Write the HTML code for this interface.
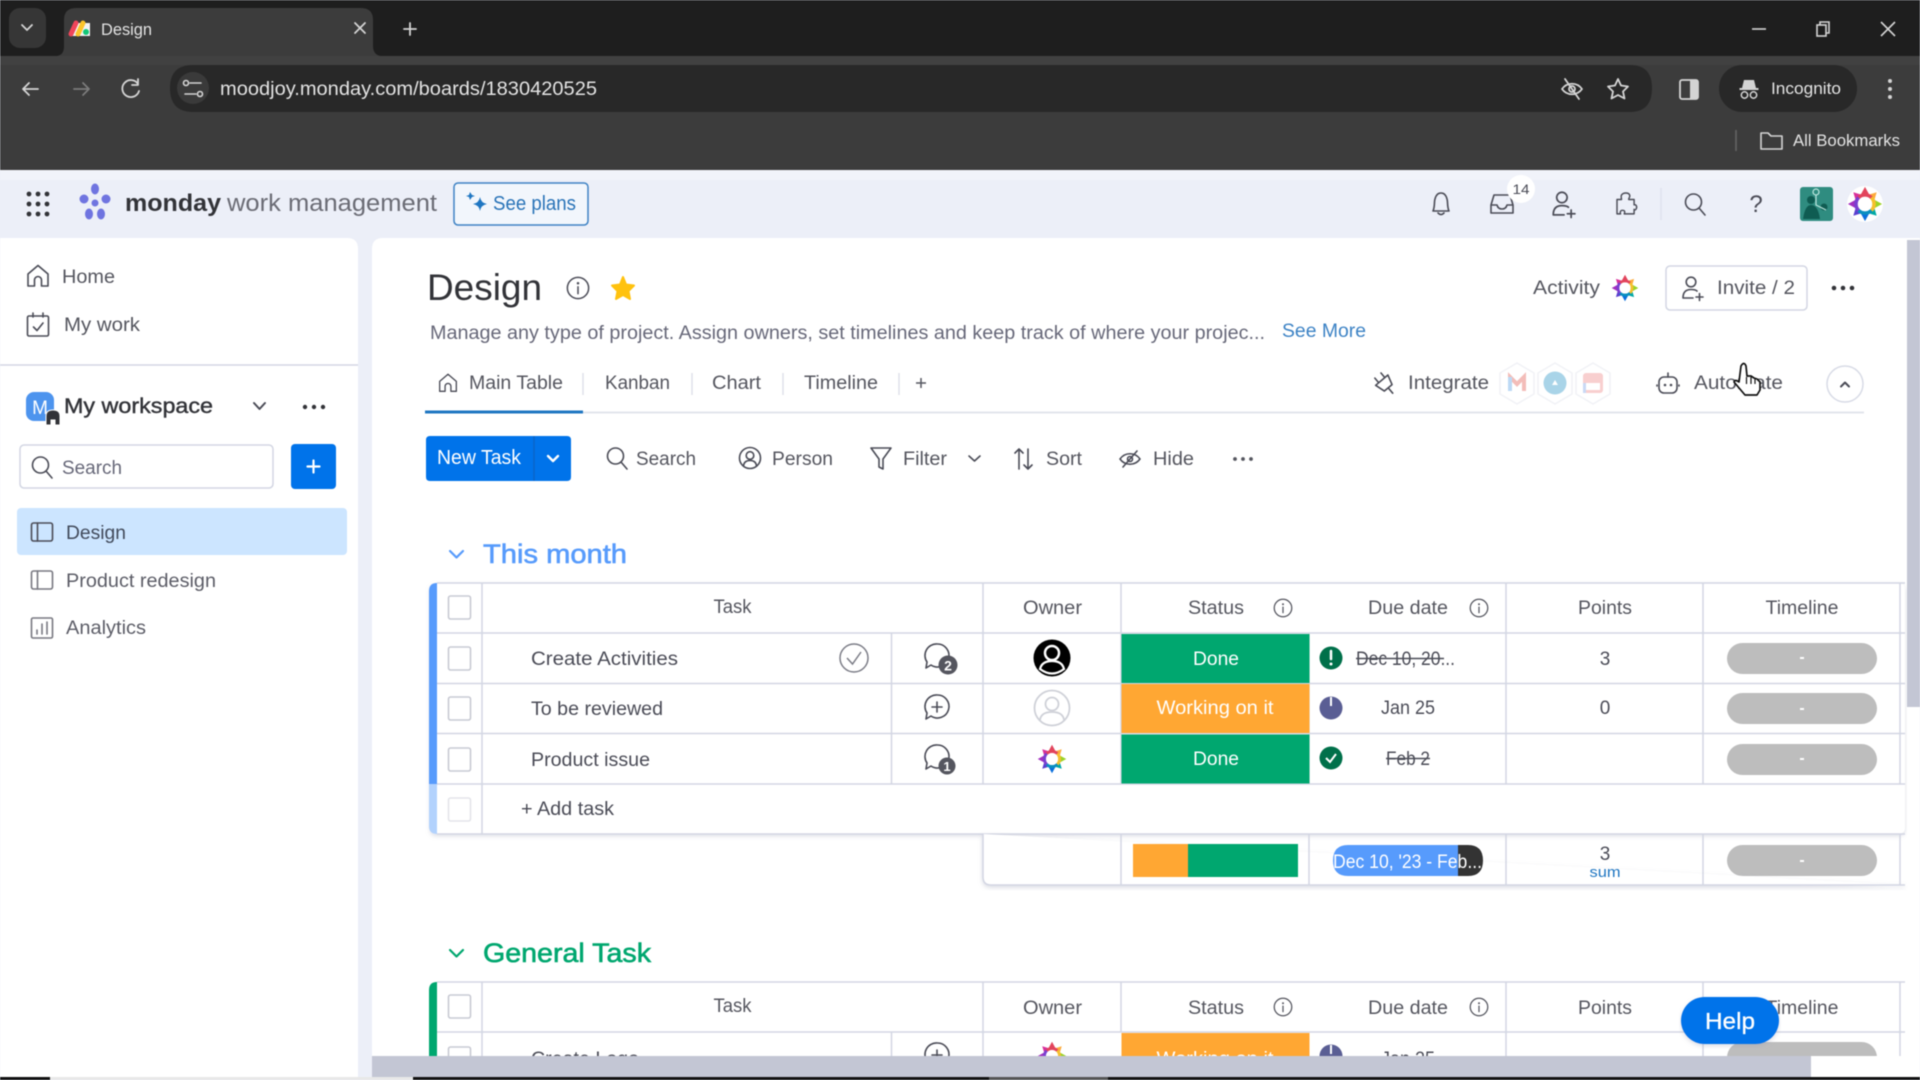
<!DOCTYPE html>
<html lang="en"><head><meta charset="utf-8"><title>Design</title>
<style>
html,body{margin:0;padding:0;background:#eceff8;width:1920px;height:1080px;overflow:hidden}
svg{display:block;position:absolute;left:0;top:0;filter:blur(.45px)}
text{font-family:"Liberation Sans",sans-serif;fill:#4b4c57;font-size:19px}
.c{text-anchor:middle}
.ch{fill:#e3e3e3;font-size:18px}
.i{fill:none;stroke:#4b4c57;stroke-width:1.6;stroke-linecap:round;stroke-linejoin:round}
.w{fill:none;stroke:#d4d4d4;stroke-width:1.8;stroke-linecap:round;stroke-linejoin:round}
.l{stroke:#d3d6e3;stroke-width:1.5}
.cb{fill:#fff;stroke:#c8cad3;stroke-width:1.6}
.st{fill:#fff;font-size:19px;text-anchor:middle}
.hd{fill:#55565f;font-size:19px}
</style></head><body>
<svg width="1920" height="1080" viewBox="0 0 1920 1080" xmlns="http://www.w3.org/2000/svg">
<defs>
<symbol id="star" viewBox="-20 -20 40 40" overflow="visible">
<polygon points="-6,-8 0,-19 6,-8" fill="#e2445c"/>
<polygon points="3,-10 13,-13 10,-3" fill="#fdab3d"/>
<polygon points="8,-6 19,0 8,6" fill="#9cd326"/>
<polygon points="10,3 13,13 3,10" fill="#00a9a5"/>
<polygon points="6,8 0,19 -6,8" fill="#0a6fdc"/>
<polygon points="-3,10 -13,13 -10,3" fill="#5a3fd0"/>
<polygon points="-8,6 -19,0 -8,-6" fill="#a22fc0"/>
<polygon points="-10,-3 -13,-13 -3,-10" fill="#d92f9a"/>
<circle r="10" fill="none" stroke="#e2445c" stroke-width="4" stroke-dasharray="15.7 47.1" transform="rotate(-135)"/>
<circle r="10" fill="none" stroke="#f5c02e" stroke-width="4" stroke-dasharray="15.7 47.1" transform="rotate(-45)"/>
<circle r="10" fill="none" stroke="#0a8fc0" stroke-width="4" stroke-dasharray="15.7 47.1" transform="rotate(45)"/>
<circle r="10" fill="none" stroke="#7a3fd0" stroke-width="4" stroke-dasharray="15.7 47.1" transform="rotate(135)"/>
<circle r="8" fill="#fff"/>
</symbol>
<symbol id="home" viewBox="-12 -12 24 24" overflow="visible">
<path class="i" d="M-10 -2 L0 -10.5 L10 -2 V10 H3.5 V4 A3.5 3.5 0 0 0 -3.5 4 V10 H-10 Z"/>
</symbol>
<symbol id="board" viewBox="-12 -12 24 24" overflow="visible">
<rect class="i" x="-10.5" y="-9" width="21" height="18" rx="2"/><path class="i" d="M-4.5 -9 V9"/>
</symbol>
<symbol id="info" viewBox="-12 -12 24 24" overflow="visible">
<circle class="i" r="8.5" style="stroke-width:1.2"/><path class="i" d="M0 -1 V4.5" style="stroke-width:1.2"/><circle cy="-3.8" r="1" fill="#4b4c57"/>
</symbol>
<symbol id="infob" viewBox="-12 -12 24 24" overflow="visible">
<circle class="i" r="10.5" style="stroke-width:1.5;stroke:#55565f"/><path class="i" d="M0 -1 V5.5" style="stroke-width:1.5;stroke:#55565f"/><circle cy="-4.5" r="1.2" fill="#55565f"/>
</symbol>
<symbol id="search" viewBox="-12 -12 24 24" overflow="visible">
<circle class="i" cx="-1.5" cy="-2" r="8"/><path class="i" d="M4 4 L10 11"/>
</symbol>
<symbol id="inv" viewBox="-12 -12 24 24" overflow="visible">
<circle class="i" cx="-1" cy="-6" r="4.8"/><path class="i" d="M-9 10 C-9 4 -6 1.5 -1 1.5 C2 1.5 4 2 5 3 M-9 10 H1 M4 9 H11 M7.5 5.5 V12.5"/>
</symbol>
<symbol id="bub" viewBox="-14 -14 28 28" overflow="visible">
<path class="i" d="M0 -12 A11.5 11.5 0 1 1 -6 9 L-11 12 L-10 6 A11.5 11.5 0 0 1 0 -12 Z"/>
</symbol>
<symbol id="hex" viewBox="-22 -22 44 44" overflow="visible">
<polygon points="0,-20 17,-10 17,11 0,21 -17,11 -17,-10" fill="#fff" stroke="#f1f2f6" stroke-width="1.5"/>
</symbol>
<filter id="sh" x="-2%" y="-5%" width="104%" height="115%"><feDropShadow dx="0" dy="2" stdDeviation="2.500" flood-color="#9aa0b5" flood-opacity=".35"/></filter>
</defs>

<!-- browser chrome -->
<rect width="1920" height="56" fill="#1e1e1e"/>
<rect y="56" width="1920" height="114" fill="#3c3c3c"/>
<rect y="56" width="1920" height="9" fill="#414141"/>
<rect x="9" y="8" width="37" height="40" rx="11" fill="#363636"/>
<path class="w" d="M22 25 L27 30 L32 25"/>
<path d="M55 56 C62 56 64 52 64 46 V20 Q64 8 76 8 H361 Q373 8 373 20 V46 C373 52 376 56 382 56 Z" fill="#3c3c3c"/>
<path d="M70 34 L75 23 L90 23 L90 36 L70 36 Z" fill="#f3f3f3"/>
<g stroke-width="5" stroke-linecap="round" fill="none">
<path d="M71 34 L76 23" stroke="#f0455a"/><path d="M78 34 L83 23" stroke="#fcc52a"/></g>
<circle cx="86" cy="32" r="3" fill="#12c777"/>
<text class="ch" x="101" y="35" textLength="51" lengthAdjust="spacingAndGlyphs" style="font-size:17px">Design</text>
<path class="w" d="M355 23 L365 33 M365 23 L355 33"/>
<path class="w" d="M404 29 H416 M410 23 V35"/>
<path d="M170 88 Q170 65 193 65 H1630 Q1652 65 1652 88 Q1652 112 1630 112 H193 Q170 112 170 88 Z" fill="#282828"/>
<path class="w" d="M23 89 H38 M29 83 L23 89 L29 95"/>
<path class="w" d="M74 89 H89 M83 83 L89 89 L83 95" style="stroke:#7b7b7b"/>
<path class="w" d="M138 84 A8.5 8.5 0 1 0 139 91 M138 79 V85 H132"/>
<circle cx="193" cy="88" r="16" fill="#3a3a3a"/>
<path class="w" d="M190 83 H201 M185 94 H196" style="stroke-width:1.6"/>
<circle cx="186" cy="83" r="2.5" fill="none" stroke="#d4d4d4" stroke-width="1.6"/><circle cx="200" cy="94" r="2.5" fill="none" stroke="#d4d4d4" stroke-width="1.6"/>
<text class="ch" x="220" y="95" textLength="377" lengthAdjust="spacingAndGlyphs" style="font-size:19px">moodjoy.monday.com/boards/1830420525</text>
<g transform="translate(1572 89)"><path class="w" d="M-10 0 C-5 -7 5 -7 10 0 C5 7 -5 7 -10 0 Z M-7 -10 L7 10"/><circle r="3" class="w"/></g>
<path class="w" d="M1618 79 L1621 85.500 L1628 86.500 L1623 91.500 L1624.500 98.500 L1618 95 L1611.500 98.500 L1613 91.500 L1608 86.500 L1615 85.500 Z"/>
<rect x="1680" y="80" width="18" height="19" rx="2" fill="none" stroke="#d4d4d4" stroke-width="1.800"/><rect x="1690" y="80" width="8" height="19" fill="#d4d4d4"/>
<rect x="1719" y="65" width="138" height="47" rx="23" fill="#282828"/>
<path d="M1744 80 H1754 L1756 88 H1758.500 V90 H1739.500 V88 H1742 Z" fill="#d4d4d4"/>
<circle cx="1744.500" cy="95" r="3.200" class="w" style="stroke-width:1.500"/><circle cx="1753.500" cy="95" r="3.200" class="w" style="stroke-width:1.500"/>
<text class="ch" x="1771" y="94" textLength="70" lengthAdjust="spacingAndGlyphs" style="font-size:17px">Incognito</text>
<circle cx="1890" cy="81" r="2" fill="#d4d4d4"/><circle cx="1890" cy="89" r="2" fill="#d4d4d4"/><circle cx="1890" cy="97" r="2" fill="#d4d4d4"/>
<path d="M1752 29 H1766" stroke="#d4d4d4" stroke-width="1.600"/>
<rect x="1817" y="25" width="9" height="11" fill="none" stroke="#d4d4d4" stroke-width="1.600"/><path d="M1820 25 V22 H1829 V33 H1826" fill="none" stroke="#d4d4d4" stroke-width="1.600"/>
<path d="M1881 22 L1895 36 M1895 22 L1881 36" stroke="#d4d4d4" stroke-width="1.600"/>
<path d="M1736 130 V151" stroke="#666" stroke-width="1.500"/>
<path class="w" d="M1761 133 H1768 L1771 136 H1782 V149 H1761 Z" style="stroke-width:1.600"/>
<text class="ch" x="1793" y="146" textLength="107" lengthAdjust="spacingAndGlyphs" style="font-size:17px">All Bookmarks</text>

<!-- app frame -->
<rect y="170" width="1920" height="907" fill="#eceff8"/>
<rect y="170" width="1920" height="10" fill="#f1f3fa"/>
<g fill="#323338">
<circle cx="29" cy="194" r="2.400"/><circle cx="38" cy="194" r="2.400"/><circle cx="47" cy="194" r="2.400"/>
<circle cx="29" cy="204" r="2.400"/><circle cx="38" cy="204" r="2.400"/><circle cx="47" cy="204" r="2.400"/>
<circle cx="29" cy="214" r="2.400"/><circle cx="38" cy="214" r="2.400"/><circle cx="47" cy="214" r="2.400"/>
</g>
<g fill="#6f74e0">
<ellipse cx="95" cy="189" rx="4" ry="5.500"/><ellipse cx="84" cy="199" rx="4.500" ry="4.500"/><ellipse cx="106" cy="199" rx="4.500" ry="4.500"/>
<ellipse cx="95" cy="203" rx="3.500" ry="3.500"/><ellipse cx="89" cy="214" rx="4" ry="5.500"/><ellipse cx="101" cy="214" rx="4" ry="5.500"/></g>
<text x="125" y="211" textLength="96" lengthAdjust="spacingAndGlyphs" style="font-size:24px;font-weight:bold;fill:#323338">monday</text>
<text x="227" y="211" textLength="210" lengthAdjust="spacingAndGlyphs" style="font-size:24px;fill:#6b6c75">work management</text>
<rect x="454" y="183" width="134" height="42" rx="4" fill="#f2f6fc" stroke="#3e82c4" stroke-width="1.500"/>
<path d="M480 197 Q481 203 487 204 Q481 205 480 211 Q479 205 473 204 Q479 203 480 197 Z" fill="#1f76c2"/>
<path d="M470 192 L472 195 L475 196 L472 197 L470 200 L469 197 L466 196 L469 195 Z" fill="#1f76c2"/>
<text x="493" y="210" textLength="83" lengthAdjust="spacingAndGlyphs" style="fill:#2a74b8;font-size:20px">See plans</text>
<g transform="translate(1441 204)"><path class="i" d="M-8 7 C-6 3 -7 -2 -6 -5 C-5 -9 -3 -11 0 -11 C3 -11 5 -9 6 -5 C7 -2 6 3 8 7 Z M-3 9 Q0 12 3 9"/></g>
<g transform="translate(1502 204)"><path class="i" d="M-11 1 L-8 -9 H8 L11 1 V9 H-11 Z M-11 1 H-5 Q-4 5 0 5 Q4 5 5 1 H11"/></g>
<circle cx="1521" cy="189" r="14" fill="#fff"/>
<text x="1521" y="194" class="c" textLength="17" lengthAdjust="spacingAndGlyphs" style="font-size:14px">14</text>
<use href="#inv" x="1550" y="191" width="26" height="26"/>
<g transform="translate(1626 204)"><path class="i" d="M-10 -5 H-5 C-5 -7 -6 -8 -5 -10 C-3 -13 3 -13 4 -10 C5 -8 3 -7 3 -5 H9 V1 C11 0 13 3 11 6 C10 7 9 7 9 6 V11 H-2 C-1 9 -1 7 -4 7 C-6 7 -7 9 -6 11 H-10 Z" transform="scale(.9)"/></g>
<path d="M1661 188 V220" stroke="#dfe2ee" stroke-width="1.500"/>
<use href="#search" x="1683" y="192" width="24" height="24"/>
<text x="1756" y="212" class="c" style="font-size:24px;fill:#4b4c57">?</text>
<rect x="1800" y="187" width="33" height="34" rx="3" fill="#2f8c80"/>
<g fill="#0f5c52"><circle cx="1811" cy="200" r="4"/><path d="M1803 219 Q1805 205 1811 205 Q1818 205 1820 219 Z"/><circle cx="1824" cy="207" r="3.500"/></g>
<g stroke="#bde6de" stroke-width="1.200" fill="none"><circle cx="1816" cy="192" r="3"/><path d="M1816 195 V205 L1826 210"/></g>
<circle cx="1865" cy="204" r="18" fill="#fff"/>
<use href="#star" x="1847" y="186" width="36" height="36"/>

<!-- sidebar -->
<path d="M0 238 H347 Q358 238 358 249 V1077 H0 Z" fill="#fff"/>
<use href="#home" x="26" y="264" width="24" height="24"/>
<text x="62" y="283" textLength="53" lengthAdjust="spacingAndGlyphs" style="fill:#55565f">Home</text>
<g transform="translate(38 325)"><rect class="i" x="-10.500" y="-9" width="21" height="20" rx="1.500"/><path class="i" d="M-5 -12 V-8 M5 -12 V-8 M-4.500 2 L-1 5.500 L5 -2"/></g>
<text x="64" y="331" textLength="76" lengthAdjust="spacingAndGlyphs" style="fill:#55565f">My work</text>
<path d="M0 365 H358" stroke="#d3d6e3" stroke-width="1.500"/>
<rect x="26" y="392" width="28" height="29" rx="8" fill="#4d94ee"/>
<text x="40" y="414" class="c" style="font-size:19px;fill:#fff">M</text>
<path d="M46 425 V416 Q46 410 53 410 Q60 410 60 416 V425 H55 V420 H51 V425 Z" fill="#323338" stroke="#fff" stroke-width="1"/>
<text x="64" y="413" textLength="149" lengthAdjust="spacingAndGlyphs" style="font-size:21px;fill:#323338;stroke:#323338;stroke-width:.4">My workspace</text>
<path class="i" d="M254 403 L259.500 409 L265 403" style="stroke-width:2"/>
<g fill="#323338"><circle cx="305" cy="407" r="2.200"/><circle cx="314" cy="407" r="2.200"/><circle cx="323" cy="407" r="2.200"/></g>
<rect x="20" y="445" width="253" height="43" rx="4" fill="#fff" stroke="#d3d6e3" stroke-width="1.500"/>
<use href="#search" x="30" y="455" width="24" height="24"/>
<text x="62" y="474" textLength="60" lengthAdjust="spacingAndGlyphs" style="fill:#676879">Search</text>
<rect x="291" y="444" width="45" height="45" rx="4" fill="#0073ea"/>
<path d="M313.500 460.500 V472.500 M307.500 466.500 H319.500" stroke="#fff" stroke-width="2.200" stroke-linecap="round"/>
<rect x="17" y="508" width="330" height="47" rx="4" fill="#cce5ff"/>
<use href="#board" x="30" y="520" width="24" height="24"/>
<text x="66" y="539" textLength="60" lengthAdjust="spacingAndGlyphs" style="fill:#424b5c">Design</text>
<use href="#board" x="30" y="568" width="24" height="24" opacity=".75"/>
<text x="66" y="587" textLength="150" lengthAdjust="spacingAndGlyphs" style="fill:#5c5d67">Product redesign</text>
<g transform="translate(42 628)" opacity=".75"><rect class="i" x="-10.500" y="-10" width="21" height="20" rx="1.500"/><path class="i" d="M-5 6 V2 M0 6 V-4 M5 6 V-6"/></g>
<text x="66" y="634" textLength="80" lengthAdjust="spacingAndGlyphs" style="fill:#5c5d67">Analytics</text>

<!-- main panel -->
<path d="M372 1077 V249 Q372 238 383 238 H1907 V1077 Z" fill="#fff"/>
<text x="427" y="300" textLength="115" lengthAdjust="spacingAndGlyphs" style="font-size:37px;fill:#323338">Design</text>
<use href="#info" x="563" y="273" width="30" height="30"/>
<path d="M623 277 L626 284.500 L634 285.500 L628.500 291 L630 299 L623 295 L616 299 L617.500 291 L612 285.500 L620 284.500 Z" fill="#ffc20e" stroke="#ffc20e" stroke-width="2" stroke-linejoin="round"/>
<text x="430" y="339" textLength="835" lengthAdjust="spacingAndGlyphs" style="fill:#676879;font-size:19px">Manage any type of project. Assign owners, set timelines and keep track of where your projec...</text>
<text x="1282" y="337" textLength="84" lengthAdjust="spacingAndGlyphs" style="fill:#3d83c5">See More</text>
<text x="1533" y="294" textLength="67" lengthAdjust="spacingAndGlyphs" style="fill:#55565f">Activity</text>
<use href="#star" x="1611" y="274" width="28" height="28"/>
<rect x="1666" y="266" width="141" height="44" rx="4" fill="#fff" stroke="#d3d6e3" stroke-width="1.500"/>
<use href="#inv" x="1680" y="276" width="24" height="24"/>
<text x="1717" y="294" textLength="78" lengthAdjust="spacingAndGlyphs" style="fill:#55565f">Invite / 2</text>
<g fill="#323338"><circle cx="1834" cy="288" r="2.300"/><circle cx="1843" cy="288" r="2.300"/><circle cx="1852" cy="288" r="2.300"/></g>

<use href="#home" x="438" y="373" width="20" height="20"/>
<text x="469" y="389" textLength="94" lengthAdjust="spacingAndGlyphs" style="fill:#55565f">Main Table</text>
<text x="605" y="389" textLength="65" lengthAdjust="spacingAndGlyphs" style="fill:#55565f">Kanban</text>
<text x="712" y="389" textLength="49" lengthAdjust="spacingAndGlyphs" style="fill:#55565f">Chart</text>
<text x="804" y="389" textLength="74" lengthAdjust="spacingAndGlyphs" style="fill:#55565f">Timeline</text>
<path d="M916 383 H926 M921 378 V388" stroke="#55565f" stroke-width="1.500"/>
<path d="M583 373 V395 M692 373 V395 M783 373 V395 M899 373 V395" stroke="#dfe2ea" stroke-width="1.500"/>
<path d="M425 412.500 H1864" stroke="#dfe2ea" stroke-width="1.800"/>
<path d="M425 412 H583" stroke="#1f76c2" stroke-width="3"/>
<g transform="translate(1385 384) rotate(-40)"><path class="i" d="M-4 -11 V-5 M4 -11 V-5 M-8 -5 H8 L5 5 H-5 Z M0 5 V12"/></g>
<text x="1408" y="389" textLength="81" lengthAdjust="spacingAndGlyphs" style="fill:#55565f">Integrate</text>
<use href="#hex" x="1495" y="361" width="44" height="44"/><use href="#hex" x="1533" y="361" width="44" height="44"/><use href="#hex" x="1571" y="361" width="44" height="44"/>
<path d="M1510 391 V377 L1517 384 L1524 377 V391" fill="none" stroke="#f3bdb9" stroke-width="4"/>
<path d="M1510 391 V377" stroke="#bcd9f5" stroke-width="4"/>
<circle cx="1555" cy="383" r="11.500" fill="#a9d4e8"/><path d="M1555 380 L1558 385 H1552 Z" fill="#fff"/>
<rect x="1583" y="373" width="20" height="20" rx="3" fill="#f8cfcf"/><rect x="1586" y="383" width="14" height="7" fill="#fff"/><rect x="1583" y="383" width="3" height="10" fill="#c9d9f5"/>
<g transform="translate(1668 384)"><rect class="i" x="-9" y="-7" width="18" height="16" rx="5"/><path class="i" d="M0 -7 V-11 M-11 1 V2 M11 1 V2"/><circle cx="-3" cy="1" r="1.300" fill="#4b4c57"/><circle cx="3" cy="1" r="1.300" fill="#4b4c57"/></g>
<text x="1694" y="389" textLength="89" lengthAdjust="spacingAndGlyphs" style="fill:#55565f">Automate</text>
<circle cx="1845" cy="384" r="18" fill="#fff" stroke="#d8dbe6" stroke-width="1.500"/>
<path class="i" d="M1841 386.500 L1845 382.500 L1849 386.500" style="stroke-width:2"/>
<!-- cursor -->
<path d="M1741 366 Q1744 361 1746 366 L1747 376 L1751 376 L1754 378 L1757 379 L1760 382 L1760 390 L1757 395 H1745 L1734 382 Q1735 379 1739 382 Z" fill="#fff" stroke="#111" stroke-width="1.700" stroke-linejoin="round"/>
<path d="M1746.500 377 V384 M1751 377 V384 M1755 379 V384" stroke="#111" stroke-width="1.200"/>

<path d="M426 440 Q426 436 430 436 H567 Q571 436 571 440 V477 Q571 481 567 481 H430 Q426 481 426 477 Z" fill="#0073ea"/>
<path d="M534 436 V481" stroke="#0a66c9" stroke-width="1.500"/>
<text x="437" y="464" textLength="84" lengthAdjust="spacingAndGlyphs" style="fill:#fff;font-size:20px">New Task</text>
<path d="M548 456 L553 461 L558 456" fill="none" stroke="#fff" stroke-width="2.400" stroke-linecap="round" stroke-linejoin="round"/>
<use href="#search" x="605" y="446" width="24" height="24"/>
<text x="636" y="465" textLength="60" lengthAdjust="spacingAndGlyphs" style="fill:#55565f">Search</text>
<g transform="translate(750 458)"><circle class="i" r="10.500"/><circle class="i" cy="-2.500" r="3.800"/><path class="i" d="M-6.500 8 Q-6 2.500 0 2.500 Q6 2.500 6.500 8"/></g>
<text x="772" y="465" textLength="61" lengthAdjust="spacingAndGlyphs" style="fill:#55565f">Person</text>
<path class="i" d="M871 448 H891 L883 459 V469 L879 467 V459 Z"/>
<text x="903" y="465" textLength="44" lengthAdjust="spacingAndGlyphs" style="fill:#55565f">Filter</text>
<path class="i" d="M969 456 L974.500 461 L980 456"/>
<path class="i" d="M1019 469 V449 M1015 453 L1019 449 L1023 453 M1028 449 V469 M1024 465 L1028 469 L1032 465"/>
<text x="1046" y="465" textLength="36" lengthAdjust="spacingAndGlyphs" style="fill:#55565f">Sort</text>
<g transform="translate(1130 459)"><path class="i" d="M-10 0 C-5 -7 5 -7 10 0 C5 7 -5 7 -10 0 Z M-7 8 L7 -8"/><circle class="i" r="2.500"/></g>
<text x="1153" y="465" textLength="41" lengthAdjust="spacingAndGlyphs" style="fill:#55565f">Hide</text>
<g fill="#55565f"><circle cx="1235" cy="459" r="1.900"/><circle cx="1243" cy="459" r="1.900"/><circle cx="1251" cy="459" r="1.900"/></g>

<!-- group 1 -->
<path d="M450 551 L456.500 557.500 L463 551" fill="none" stroke="#579bfc" stroke-width="2.200" stroke-linecap="round" stroke-linejoin="round"/>
<text x="483" y="563" textLength="144" lengthAdjust="spacingAndGlyphs" style="font-size:27px;fill:#579bfc;stroke:#579bfc;stroke-width:.6">This month</text>
<rect x="430" y="583" width="1475" height="251" rx="6" fill="#fff" filter="url(#sh)"/>
<path d="M437 583 Q429 583 429 591 V784 H437 Z" fill="#579bfc"/>
<path d="M437 784 V834 Q429 834 429 826 V784 Z" fill="#b2d2fd"/>
<path class="l" d="M437 583 H1905 M437 633 H1905 M437 683.500 H1905 M437 733.500 H1905 M437 784 H1905 M437 834 H1905"/>
<path class="l" d="M482 583 V834 M891.500 633 V784 M983 583 V784 M1121 583 V784 M1309 633 V784 M1506 583 V784 M1703 583 V784 M1900 583 V784"/>
<rect class="cb" x="448.500" y="596" width="22" height="23" rx="2"/>
<rect class="cb" x="448.500" y="647" width="22" height="23" rx="2"/>
<rect class="cb" x="448.500" y="697" width="22" height="23" rx="2"/>
<rect class="cb" x="448.500" y="748" width="22" height="23" rx="2"/>
<rect class="cb" x="448.500" y="798" width="22" height="23" rx="2" style="stroke:#e4e5ea"/>
<text class="hd c" x="732.500" y="613" textLength="38" lengthAdjust="spacingAndGlyphs">Task</text>
<text class="hd c" x="1052.500" y="614" textLength="59" lengthAdjust="spacingAndGlyphs">Owner</text>
<text class="hd c" x="1216" y="614" textLength="56" lengthAdjust="spacingAndGlyphs">Status</text>
<use href="#infob" x="1273" y="598" width="20" height="20"/>
<text class="hd c" x="1408" y="614" textLength="80" lengthAdjust="spacingAndGlyphs">Due date</text>
<use href="#infob" x="1469" y="598" width="20" height="20"/>
<text class="hd c" x="1605" y="614" textLength="54" lengthAdjust="spacingAndGlyphs">Points</text>
<text class="hd c" x="1802" y="614" textLength="73" lengthAdjust="spacingAndGlyphs">Timeline</text>

<text x="531" y="665" textLength="147" lengthAdjust="spacingAndGlyphs">Create Activities</text>
<text x="531" y="715" textLength="132" lengthAdjust="spacingAndGlyphs">To be reviewed</text>
<text x="531" y="766" textLength="119" lengthAdjust="spacingAndGlyphs">Product issue</text>
<text x="521" y="815" textLength="93" lengthAdjust="spacingAndGlyphs">+ Add task</text>
<circle cx="854" cy="658" r="14" fill="none" stroke="#7c7d87" stroke-width="1.500"/>
<path d="M847 658 L852.500 664 L861 652" fill="none" stroke="#7c7d87" stroke-width="1.500"/>
<use href="#bub" x="923" y="642" width="28" height="28"/>
<circle cx="948" cy="665" r="9.500" fill="#55565f"/><text x="948" y="670.500" class="c" style="font-size:14px;fill:#fff;font-weight:bold">2</text>
<g transform="translate(937 707)"><path class="i" d="M0 -12 A11.500 11.500 0 1 1 -6 9 L-11 12 L-10 6 A11.500 11.500 0 0 1 0 -12 Z M0 -5 V5 M-5 0 H5"/></g>
<use href="#bub" x="923" y="743" width="28" height="28"/>
<circle cx="947" cy="766" r="8.500" fill="#55565f"/><text x="947" y="771" class="c" style="font-size:13px;fill:#fff;font-weight:bold">1</text>
<circle cx="1052" cy="658" r="18.500" fill="#000"/>
<circle cx="1052" cy="653" r="7" fill="#000" stroke="#fff" stroke-width="2.500"/>
<path d="M1040 669 Q1042 661 1052 661 Q1062 661 1064 669 Q1052 678 1040 669 Z" fill="#000" stroke="#fff" stroke-width="2.200"/>
<circle cx="1052" cy="708" r="17.500" fill="#fff" stroke="#cfd1d8" stroke-width="1.800"/>
<circle cx="1052" cy="704" r="6.500" fill="#fff" stroke="#cfd1d8" stroke-width="1.800"/>
<path d="M1040 720 Q1041 712 1052 712 Q1063 712 1064 720" fill="none" stroke="#cfd1d8" stroke-width="1.800"/>
<use href="#star" x="1037" y="744" width="30" height="30"/>

<rect x="1121.500" y="634" width="188" height="49" fill="#00a76f"/>
<rect x="1121.500" y="684" width="188" height="49" fill="#ffa733"/>
<rect x="1121.500" y="734.500" width="188" height="49" fill="#00a76f"/>
<text class="st" x="1216" y="665" textLength="46" lengthAdjust="spacingAndGlyphs">Done</text>
<text class="st" x="1215" y="714" textLength="117" lengthAdjust="spacingAndGlyphs">Working on it</text>
<text class="st" x="1216" y="765" textLength="46" lengthAdjust="spacingAndGlyphs">Done</text>
<circle cx="1331" cy="658" r="11.500" fill="#00704a"/>
<path d="M1331 651 V659" stroke="#fff" stroke-width="2.500" stroke-linecap="round"/><circle cx="1331" cy="664" r="1.500" fill="#fff"/>
<text x="1356" y="665" textLength="99" lengthAdjust="spacingAndGlyphs">Dec 10, 20...</text>
<path d="M1356 658.500 H1444" stroke="#4b4c57" stroke-width="1.500"/>
<circle cx="1331" cy="708" r="11.500" fill="#5a5e94"/>
<path d="M1331 697 L1331 706" stroke="#fff" stroke-width="2"/>
<text x="1381" y="714" textLength="54" lengthAdjust="spacingAndGlyphs">Jan 25</text>
<circle cx="1331" cy="758" r="11.500" fill="#00704a"/>
<path d="M1326 758 L1330 762 L1336 754" fill="none" stroke="#fff" stroke-width="2"/>
<text x="1386" y="765" textLength="44" lengthAdjust="spacingAndGlyphs">Feb 2</text>
<path d="M1386 758.500 H1430" stroke="#4b4c57" stroke-width="1.500"/>
<text class="c" x="1605" y="665">3</text>
<text class="c" x="1605" y="714">0</text>
<g fill="#bdbdbd"><rect x="1727" y="643" width="150" height="31" rx="15.500"/><rect x="1727" y="693" width="150" height="31" rx="15.500"/><rect x="1727" y="744" width="150" height="31" rx="15.500"/><rect x="1727" y="845" width="150" height="31" rx="15.500"/></g>
<g fill="#fff"><rect x="1800" y="657" width="4" height="2"/><rect x="1800" y="708" width="4" height="2"/><rect x="1800" y="758" width="4" height="2"/><rect x="1800" y="860" width="4" height="2"/></g>

<!-- summary -->
<path d="M983 834 V877 Q983 885 991 885 H1905" fill="#fff" stroke="#d3d6e3" stroke-width="1.500" filter="url(#sh)"/>
<path class="l" d="M1121 834 V885 M1309 834 V885 M1506 834 V885 M1703 834 V885 M1900 834 V885"/>
<rect x="1133" y="844" width="55" height="33" fill="#ffa733"/>
<rect x="1188" y="844" width="110" height="33" fill="#00a76f"/>
<path d="M1348 845 H1458 V876 H1348 Q1333 876 1333 860.500 Q1333 845 1348 845 Z" fill="#579bfc"/>
<path d="M1458 845 H1468 Q1483 845 1483 860.500 Q1483 876 1468 876 H1458 Z" fill="#333"/>
<text x="1333" y="868" textLength="149" lengthAdjust="spacingAndGlyphs" style="fill:#fff;font-size:19px">Dec 10, '23 - Feb...</text>
<text class="c" x="1605" y="860">3</text>
<text class="c" x="1605" y="877" textLength="31" lengthAdjust="spacingAndGlyphs" style="fill:#1f76c2;font-size:15px">sum</text>

<!-- group 2 -->
<path d="M450 950 L456.500 956.500 L463 950" fill="none" stroke="#00a76f" stroke-width="2.200" stroke-linecap="round" stroke-linejoin="round"/>
<text x="483" y="962" textLength="168" lengthAdjust="spacingAndGlyphs" style="font-size:27px;fill:#00a76f;stroke:#00a76f;stroke-width:.6">General Task</text>
<path d="M437 982 Q429 982 429 990 V1060 H437 Z" fill="#00a76f"/>
<path class="l" d="M437 982 H1905 M437 1032 H1905"/>
<path class="l" d="M482 982 V1060 M891.500 1032 V1060 M983 982 V1060 M1121 982 V1032 M1506 982 V1060 M1703 982 V1060 M1900 982 V1060"/>
<rect class="cb" x="448.500" y="995" width="22" height="23" rx="2"/>
<rect class="cb" x="448.500" y="1047" width="22" height="23" rx="2"/>
<text class="hd c" x="732.500" y="1012" textLength="38" lengthAdjust="spacingAndGlyphs">Task</text>
<text class="hd c" x="1052.500" y="1014" textLength="59" lengthAdjust="spacingAndGlyphs">Owner</text>
<text class="hd c" x="1216" y="1014" textLength="56" lengthAdjust="spacingAndGlyphs">Status</text>
<use href="#infob" x="1273" y="997" width="20" height="20"/>
<text class="hd c" x="1408" y="1014" textLength="80" lengthAdjust="spacingAndGlyphs">Due date</text>
<use href="#infob" x="1469" y="997" width="20" height="20"/>
<text class="hd c" x="1605" y="1014" textLength="54" lengthAdjust="spacingAndGlyphs">Points</text>
<text class="hd c" x="1802" y="1014" textLength="73" lengthAdjust="spacingAndGlyphs">Timeline</text>
<text x="531" y="1065" textLength="108" lengthAdjust="spacingAndGlyphs">Create Logo</text>
<g transform="translate(937 1055)"><path class="i" d="M0 -12 A11.500 11.500 0 1 1 -6 9 L-11 12 L-10 6 A11.500 11.500 0 0 1 0 -12 Z M0 -5 V5 M-5 0 H5"/></g>
<use href="#star" x="1037" y="1041" width="30" height="30"/>
<rect x="1121.500" y="1033" width="188" height="40" fill="#ffa733"/>
<text class="st" x="1215" y="1065" textLength="117" lengthAdjust="spacingAndGlyphs">Working on it</text>
<circle cx="1331" cy="1056" r="11.500" fill="#5a5e94"/>
<path d="M1331 1045 L1331 1054" stroke="#fff" stroke-width="2"/>
<text x="1381" y="1065" textLength="54" lengthAdjust="spacingAndGlyphs">Jan 25</text>
<rect x="1727" y="1042" width="150" height="31" rx="15.500" fill="#bdbdbd"/>

<!-- scrollbars and bottom -->
<rect x="372" y="1056" width="1439" height="21" fill="#c3c6d4"/>
<rect x="1811" y="1056" width="96" height="21" fill="#fff"/>
<rect x="1907" y="238" width="13" height="839" fill="#fff"/>
<rect x="1907" y="240" width="13" height="467" fill="#c3c6d4"/>
<rect y="1077" width="1920" height="3" fill="#111"/>
<rect x="50" y="1077" width="363" height="3" fill="#e8e8e8"/>
<rect x="989" y="1077" width="119" height="3" fill="#555"/>

<!-- help -->
<rect x="1681" y="997" width="98" height="47" rx="23.500" fill="#0073ea" filter="url(#sh)"/>
<text class="c" x="1730" y="1029" textLength="50" lengthAdjust="spacingAndGlyphs" style="fill:#fff;font-size:23px;stroke:#fff;stroke-width:.3">Help</text>
</svg>
</body></html>
